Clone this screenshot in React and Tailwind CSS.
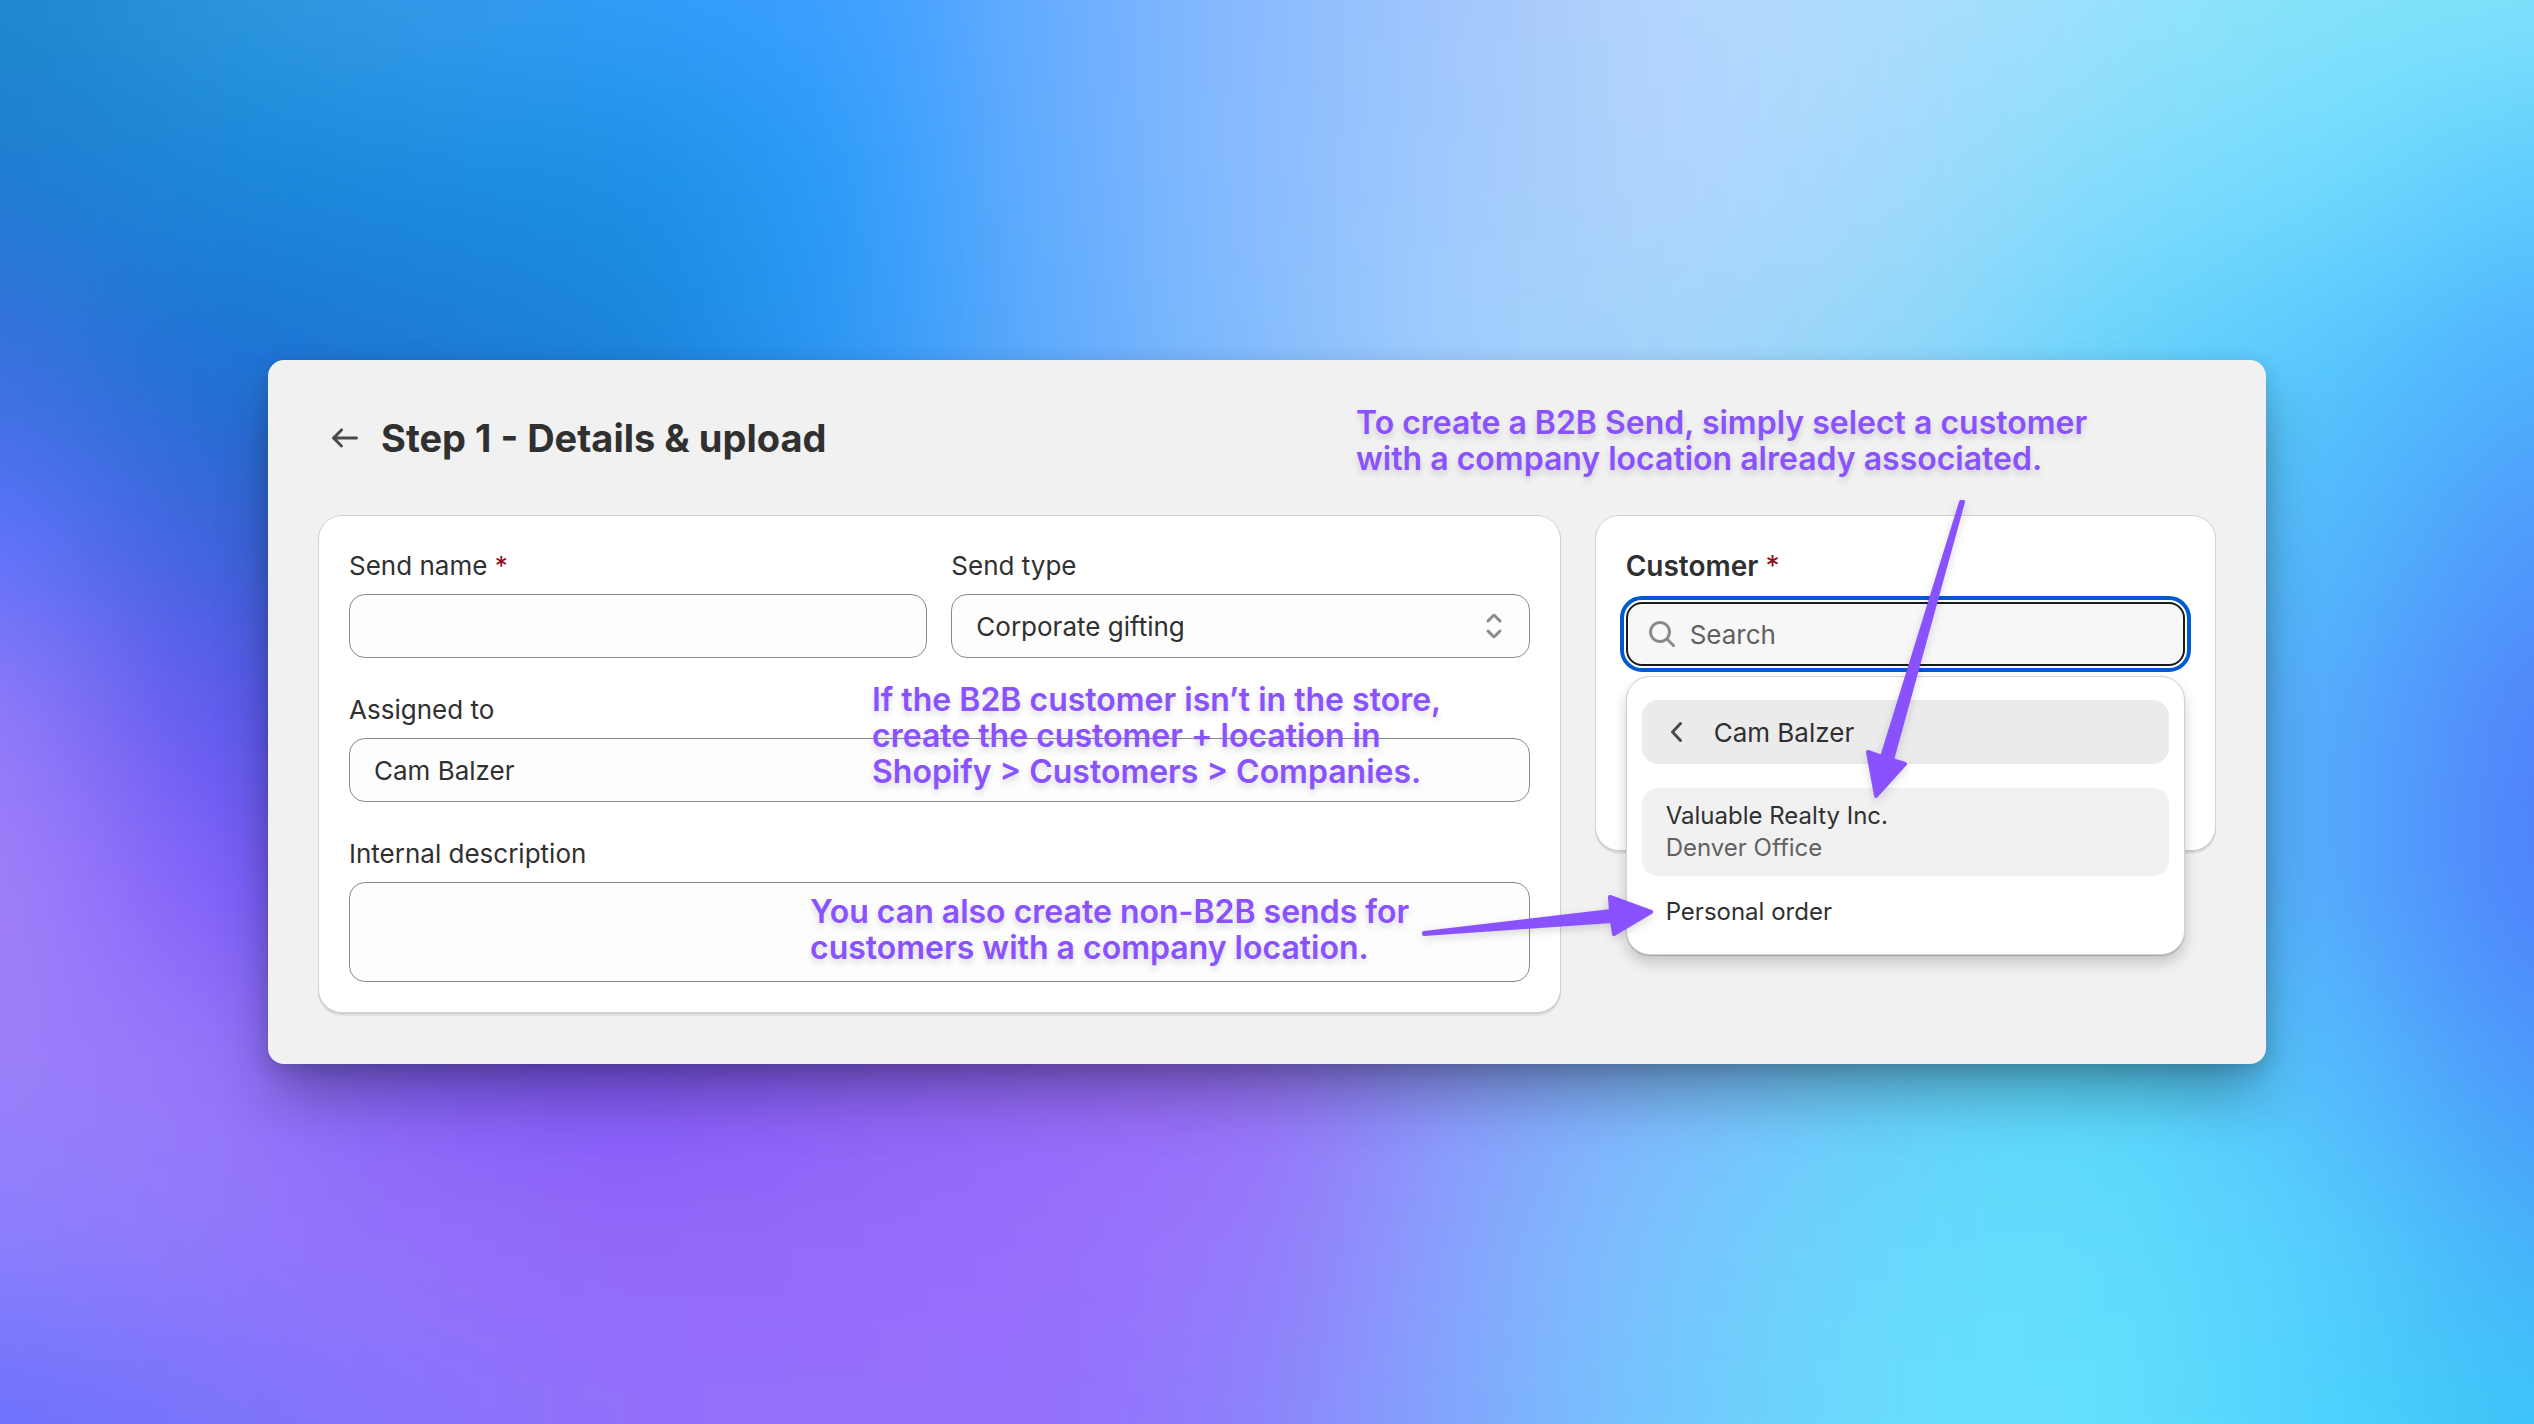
import React, { useState } from 'react'

// colour mesh of the wallpaper, one entry per grid node (left to right, top to bottom)
const MESH = [
    ['#1c88cf', '#2a95db', '#359be9', '#339dfa', '#3c9fff', '#6aadff', '#8cbcfe', '#a5c8fc', '#b5d7fd', '#acdcfc', '#98e2fc', '#84e4fb', '#82e1fb'],
    ['#1f7bd0', '#1b87d8', '#1c8cdf', '#1b8fe3', '#2b9cfa', '#68adff', '#8cbdff', '#a4cbfc', '#b2d5fd', '#a2dafc', '#84ddfc', '#72dafd', '#5cccfd'],
    ['#3a70dd', '#1a72d0', '#1d7ad4', '#1984d8', '#2b98f7', '#62acfd', '#86befd', '#a4d0fd', '#a3d5fc', '#92d8fb', '#68d4fb', '#55c8fd', '#4eb0fd'],
    ['#5f74fd', '#3a62d8', '#2c68d4', '#2a74d8', '#3f90f0', '#62a8fa', '#86b8fc', '#a0c8fc', '#9cd0fc', '#84d2fb', '#5fc8fb', '#52bafb', '#4f98fb'],
    ['#947cf9', '#5f58ee', '#4a58e0', '#4a60e0', '#5f70f0', '#7088f8', '#86a0fa', '#90b8fb', '#88c8fc', '#70d0fb', '#58c0fb', '#55acfc', '#4f82fb'],
    ['#a383f9', '#8260fb', '#6050f0', '#6852f0', '#7c60f8', '#8870f8', '#9080f8', '#88a4fa', '#7cbcfc', '#66d0fb', '#58c8fb', '#55abfc', '#4e80fc'],
    ['#9d80fb', '#9678f8', '#8460f8', '#8258f8', '#8c62f8', '#9468f8', '#9870f8', '#889efa', '#7cbcfc', '#66d0fb', '#58dafb', '#55bcfc', '#4c96fb'],
    ['#8a80fc', '#9278fa', '#9470fa', '#9369fa', '#956bfb', '#986ffb', '#967afb', '#86a8fd', '#78c8fd', '#66dafd', '#62dcfd', '#55cefd', '#45b0f8'],
    ['#6a72fc', '#7a74fc', '#8874fb', '#9270fa', '#9470fa', '#936ffb', '#8c84fb', '#80acfd', '#70ccfd', '#68defd', '#64e0fd', '#4cd2fd', '#3cc4f8'],
]

const Wallpaper = () => {
    return (
        <svg className="absolute inset-0 w-full h-full" viewBox="0 0 12 8" preserveAspectRatio="none" aria-hidden="true">
            <defs>
                <filter id="soften" filterUnits="userSpaceOnUse" x="-2" y="-2" width="16" height="12" colorInterpolationFilters="sRGB">
                    <feGaussianBlur stdDeviation="0.42" />
                </filter>
            </defs>
            <g filter="url(#soften)" shapeRendering="crispEdges">
                {
                    MESH.map((row, y) => row.map((color, x) => {
                        const left = x === 0 ? -2 : x - 0.5
                        const right = x === row.length - 1 ? 14 : x + 0.5
                        const top = y === 0 ? -2 : y - 0.5
                        const bottom = y === MESH.length - 1 ? 10 : y + 0.5
                        return <rect key={`${x}-${y}`} x={left} y={top} width={right - left} height={bottom - top} fill={color} />
                    }))
                }
            </g>
        </svg>
    )
}

const Icon = ({ d, className }) => (
    <svg className={className} viewBox="0 0 20 20" fill="currentColor" fillRule="evenodd" aria-hidden="true">
        <path d={d} />
    </svg>
)

const icons = {
    back: 'M16.5 10a.75.75 0 0 1-.75.75h-9.69l2.72 2.72a.75.75 0 0 1-1.06 1.06l-4-4a.75.75 0 0 1 0-1.06l4-4a.75.75 0 1 1 1.06 1.06l-2.72 2.72h9.69a.75.75 0 0 1 .75.75',
    search: 'M12.323 13.383a5.5 5.5 0 1 1 1.06-1.06l2.897 2.897a.75.75 0 1 1-1.06 1.06zm.677-4.383a4 4 0 1 1-8 0 4 4 0 0 1 8 0',
    chevron: 'M11.764 5.204a.75.75 0 0 1 .032 1.06l-3.516 3.736 3.516 3.736a.75.75 0 1 1-1.092 1.028l-4-4.25a.75.75 0 0 1 0-1.028l4-4.25a.75.75 0 0 1 1.06-.032',
    select: 'M10.884 4.323a1.25 1.25 0 0 0-1.768 0l-2.646 2.647a.75.75 0 0 0 1.06 1.06l2.47-2.47 2.47 2.47a.75.75 0 1 0 1.06-1.06zM13.53 13.03l-2.646 2.647a1.25 1.25 0 0 1-1.768 0l-2.646-2.647a.75.75 0 0 1 1.06-1.06l2.47 2.47 2.47-2.47a.75.75 0 0 1 1.06 1.06',
}

const card = 'bg-white border border-[#d2d2d2] rounded-3xl p-[30px] shadow-[0_1px_0_#cccccc,0_3px_0_#e2e2e2]'
const field = 'block w-full h-16 px-6 rounded-2xl border border-[#8a8a8a] bg-[#fdfdfd] text-[26px] text-[#303030] outline-none'
const label = 'block mb-2 text-[26px] leading-10'
const note = 'absolute text-[32px] leading-9 font-semibold text-[#8a52ff] whitespace-nowrap pointer-events-none [text-shadow:0_4px_6px_rgba(0,0,0,0.15)]'
const arrow = 'absolute fill-[#8a52ff] stroke-[#8a52ff] pointer-events-none drop-shadow-[0_3px_4px_rgba(0,0,0,0.15)]'

const DetailsForm = () => {
    const [name, setName] = useState('')
    const [type, setType] = useState('Corporate gifting')
    const [assignee, setAssignee] = useState('Cam Balzer')
    const [description, setDescription] = useState('')

    return (
        <form className={`${card} flex flex-col gap-8`}>
            <div className="grid grid-cols-2 gap-6">
                <div>
                    <label htmlFor="name" className={label}>Send name <span className="text-[#8e0b21]">*</span></label>
                    <input id="name" type="text" className={field} value={name} onChange={(e) => setName(e.target.value)} />
                </div>
                <div>
                    <label htmlFor="type" className={label}>Send type</label>
                    <div className="relative">
                        <select id="type" className={`${field} appearance-none`} value={type} onChange={(e) => setType(e.target.value)}>
                            <option>Corporate gifting</option>
                        </select>
                        <Icon d={icons.select} className="absolute right-4 top-3 size-10 text-[#8a8a8a] pointer-events-none" />
                    </div>
                </div>
            </div>
            <div>
                <label htmlFor="assignee" className={label}>Assigned to</label>
                <input id="assignee" type="text" className={field} value={assignee} onChange={(e) => setAssignee(e.target.value)} />
            </div>
            <div>
                <label htmlFor="description" className={label}>Internal description</label>
                <textarea id="description" className={`${field} h-[100px] py-3 resize-none`} value={description} onChange={(e) => setDescription(e.target.value)} />
            </div>
        </form>
    )
}

const CustomerCard = () => {
    const [query, setQuery] = useState('')

    return (
        <section className={`${card} min-h-[336px]`}>
            <label htmlFor="customer" className="block mb-4 text-[28px] leading-10 font-semibold">
                Customer <span className="font-normal text-[#8e0b21]">*</span>
            </label>
            <div className="relative">
                <div className="flex items-center gap-2 h-16 pl-[14px] pr-6 rounded-2xl border-2 border-[#1a1a1a] bg-[#f7f7f7] outline-4 outline-offset-2 outline-[#005bd3]">
                    <Icon d={icons.search} className="size-10 shrink-0 text-[#8a8a8a]" />
                    <input
                        id="customer"
                        type="text"
                        placeholder="Search"
                        className="w-full h-full bg-transparent text-[26px] outline-none placeholder:text-[#616161]"
                        value={query}
                        onChange={(e) => setQuery(e.target.value)}
                    />
                </div>
                <div className="absolute inset-x-0 top-full mt-[10px] px-[15px] pt-[23px] pb-[14px] rounded-3xl bg-white border border-[#d2d2d2] shadow-[0_1px_1px_rgba(0,0,0,0.2),0_8px_14px_rgba(0,0,0,0.18)]">
                    <button type="button" className="flex items-center gap-4 w-full h-16 mb-6 pl-4 rounded-2xl bg-[#ebebeb] text-[26px] text-left">
                        <Icon d={icons.chevron} className="size-10 text-[#4a4a4a]" />
                        Cam Balzer
                    </button>
                    <button type="button" className="block w-full mb-2 px-6 py-3 rounded-2xl bg-[#f1f1f1] text-2xl leading-8 text-left">
                        <span className="block">Valuable Realty Inc.</span>
                        <span className="block text-[#616161]">Denver Office</span>
                    </button>
                    <button type="button" className="block w-full px-6 py-3 rounded-2xl text-2xl leading-8 text-left">Personal order</button>
                </div>
            </div>
        </section>
    )
}

const App = () => {
    return (
        <div className="relative min-h-screen flex items-center justify-center overflow-hidden text-[#303030] font-[Inter,'Liberation_Sans',sans-serif]">
            <Wallpaper />
            <main className="relative w-full max-w-[1998px] p-[50px] pb-[51px] rounded-2xl bg-[#f1f1f1] shadow-[0_6px_20px_rgba(0,0,0,0.15),0_36px_60px_-8px_rgba(0,0,0,0.32)]">
                <header className="flex items-center gap-4 h-14 mb-[49px] pl-[7px]">
                    <button type="button" aria-label="Back">
                        <Icon d={icons.back} className="size-10 text-[#4a4a4a]" />
                    </button>
                    <h1 className="text-[38px] font-bold">Step 1 - Details &amp; upload</h1>
                </header>
                <div className="grid grid-cols-[2fr_1fr] items-start gap-[34px]">
                    <DetailsForm />
                    <CustomerCard />
                </div>

                {/* notes over the form */}
                <p className={`${note} left-[1088px] top-[45px]`}>
                    To create a B2B Send, simply select a customer<br />
                    with a company location already associated.
                </p>
                <p className={`${note} left-[604px] top-[322px]`}>
                    If the B2B customer isn’t in the store,<br />
                    create the customer + location in<br />
                    Shopify &gt; Customers &gt; Companies.
                </p>
                <p className={`${note} left-[542px] top-[534px]`}>
                    You can also create non-B2B sends for<br />
                    customers with a company location.
                </p>
                <svg className={`${arrow} left-[1592px] top-[134px] w-[110px] h-[310px]`} viewBox="0 0 110 310" strokeWidth="4" strokeLinejoin="round" aria-hidden="true">
                    <path d="M101 8L22 263L8 258L16 302L45 270L32 266L103 8Z" />
                </svg>
                <svg className={`${arrow} left-[1148px] top-[528px] w-[244px] h-14`} viewBox="0 0 244 56" strokeWidth="4" strokeLinejoin="round" aria-hidden="true">
                    <path d="M8 45L195 23L194 9L235 24L198 46L196 33L8 46Z" />
                </svg>
            </main>
        </div>
    )
}

export default App
